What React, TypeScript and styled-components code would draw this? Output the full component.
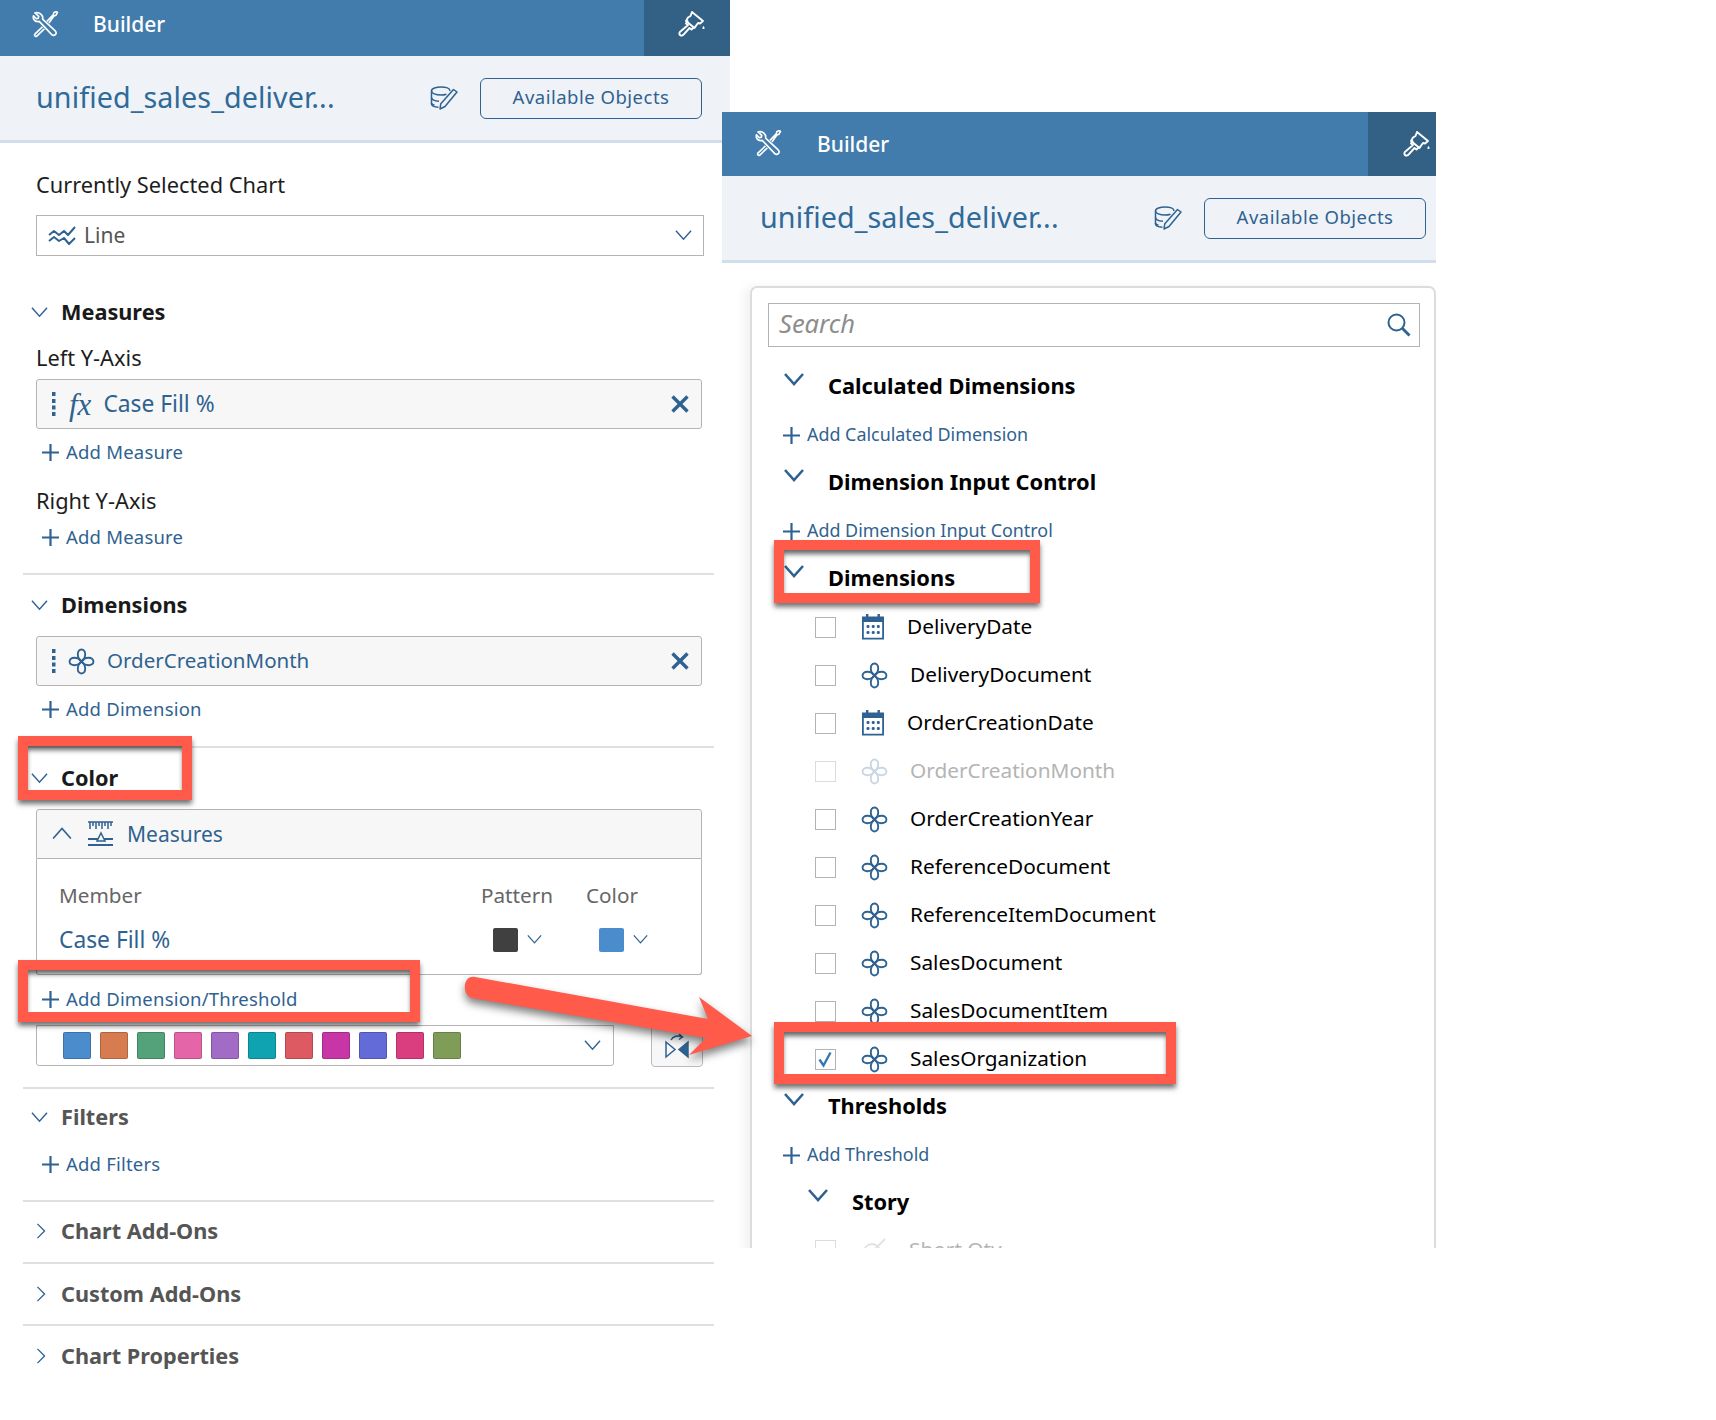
import React from 'react'
import styled, { createGlobalStyle } from 'styled-components'

const BLUE = '#2f6290'
const BAND = '#417cac'
const BAND_DARK = '#336185'
const LINE = '#b4b4b4'
const RED = '#ff5a4a'

const GlobalStyle = createGlobalStyle`
  html, body {
    margin: 0;
    padding: 0;
    background: #fff;
    font-family: "Noto Sans", "Open Sans", sans-serif;
  }
`

const Stage = styled.div`
  position: relative;
  width: 1716px;
  height: 1420px;
  overflow: hidden;
  background: #fff;
`

const LeftWindow = styled.section`
  position: absolute;
  left: 0;
  top: 0;
  width: 730px;
  background: #fff;
`

const RightWindow = styled.section`
  position: absolute;
  left: 722px;
  top: 112px;
  width: 714px;
  height: 1136px;
  overflow: hidden;
  background: #fff;
`

const TopBar = styled.header<{ $h: number; $gap: number; $pad: number; $tool: number; $lift: number; $brush: number }>`
  display: flex;
  align-items: center;
  box-sizing: border-box;
  height: ${({ $h }) => $h}px;
  padding-left: ${({ $pad }) => $pad}px;
  gap: ${({ $gap }) => $gap}px;
  background: ${BAND};
  color: #fff;
  font-size: 21px;
  font-weight: 500;
  & > svg {
    margin-bottom: ${({ $lift }) => $lift}px;
  }
  & > span {
    flex: 1;
    margin-bottom: ${({ $lift }) => $lift}px;
  }
  & > div {
    display: flex;
    align-items: center;
    box-sizing: border-box;
    width: ${({ $tool }) => $tool}px;
    height: 100%;
    padding: 0 0 ${({ $lift }) => $lift}px ${({ $brush }) => $brush}px;
    background: ${BAND_DARK};
  }
`

const SubBar = styled.div<{ $pl: number; $pr: number }>`
  display: flex;
  align-items: center;
  height: 84px;
  padding: 0 ${({ $pr }) => $pr}px 0 ${({ $pl }) => $pl}px;
  background: #eff3f8;
  border-bottom: 3px solid #d1deec;
`

const Title = styled.div`
  flex: 1;
  margin-bottom: 3px;
  color: #2f6a98;
  font-size: 28.7px;
  letter-spacing: 0.1px;
  white-space: nowrap;
`

const ObjectsButton = styled.button`
  width: 222px;
  height: 41px;
  margin-left: 22px;
  padding: 0 0 3px;
  background: transparent;
  border: 1px solid ${BLUE};
  border-radius: 6px;
  color: ${BLUE};
  font: 18.5px "Noto Sans", sans-serif;
  letter-spacing: 0.5px;
`

const LeftBody = styled.div`
  padding: 27px 0 40px;
`

const Label = styled.div<{ $mt?: number }>`
  margin: ${({ $mt = 0 }) => $mt}px 0 0 36px;
  height: 30px;
  line-height: 30px;
  font-size: 21.8px;
  color: #1d1d1d;
`

const SelectBox = styled.div`
  display: flex;
  align-items: center;
  box-sizing: border-box;
  margin: 15px 0 0 36px;
  width: 668px;
  height: 41px;
  padding: 0 11px;
  border: 1px solid ${LINE};
  color: #555;
  font-size: 21px;
  gap: 8px;
  & > span {
    flex: 1;
    margin-bottom: 2px;
  }
`

const SectionHead = styled.div<{ $mt: number; $muted?: boolean; $closed?: boolean }>`
  display: flex;
  align-items: center;
  box-sizing: border-box;
  height: 30px;
  margin-top: ${({ $mt }) => $mt}px;
  padding-left: ${({ $closed }) => ($closed ? 33 : 31)}px;
  gap: ${({ $closed }) => ($closed ? 12 : 13)}px;
  color: ${({ $muted }) => ($muted ? '#555' : '#1a1a1a')};
  font-size: 21.7px;
  font-weight: 700;
  & > span {
    margin-bottom: 2px;
  }
`

const Token = styled.div<{ $mt: number }>`
  display: flex;
  align-items: center;
  box-sizing: border-box;
  margin: ${({ $mt }) => $mt}px 0 0 36px;
  width: 666px;
  height: 50px;
  padding: 0 12px 0 14px;
  background: #f7f7f7;
  border: 1px solid ${LINE};
  border-radius: 3px;
  color: ${BLUE};
  & > svg:nth-child(2) {
    margin-left: 11px;
  }
`

const TokenText = styled.span<{ $size: number }>`
  flex: 1;
  margin: 0 0 2px 12px;
  font-size: ${({ $size }) => $size}px;
`

const FxMark = styled.i`
  margin-left: 12px;
  font-family: "Liberation Serif", serif;
  font-size: 31px;
  line-height: 1;
`

const AddLink = styled.div<{ $mt: number; $ml?: number; $small?: boolean }>`
  display: flex;
  align-items: center;
  gap: 6px;
  height: 26px;
  margin: ${({ $mt }) => $mt}px 0 0 ${({ $ml = 41 }) => $ml}px;
  color: ${BLUE};
  font-size: ${({ $small }) => ($small ? 17.9 : 18.5)}px;
  letter-spacing: ${({ $small }) => ($small ? 0 : 0.2)}px;
  & > span {
    margin-bottom: 2px;
  }
`

const Divider = styled.hr<{ $mt: number }>`
  margin: ${({ $mt }) => $mt}px 16px 0 23px;
  border: 0;
  height: 2px;
  background: #e0e0e0;
`

const ColorBox = styled.div`
  margin: 16px 0 0 36px;
  width: 666px;
`

const ColorHead = styled.div`
  display: flex;
  align-items: center;
  box-sizing: border-box;
  height: 50px;
  padding-left: 15px;
  gap: 13px;
  background: #f7f7f7;
  border: 1px solid ${LINE};
  border-radius: 3px 3px 0 0;
  color: ${BLUE};
  font-size: 21px;
  & > svg:first-child {
    margin-right: 2px;
  }
`

const ColorTable = styled.div`
  box-sizing: border-box;
  height: 116px;
  padding: 13px 0 0 22px;
  border: 1px solid ${LINE};
  border-top: 0;
  border-radius: 0 0 3px 3px;
  display: grid;
  grid-template-columns: 422px 105px 1fr;
  grid-auto-rows: 45px;
  align-items: center;
  font-size: 20.7px;
  color: #666;
`

const MemberLink = styled.span`
  color: ${BLUE};
  font-size: 22.8px;
`

const SwatchPick = styled.div<{ $pl: number }>`
  display: flex;
  align-items: center;
  gap: 9px;
  padding-left: ${({ $pl }) => $pl}px;
`

const Swatch = styled.i<{ $c: string; $w?: number; $h?: number; $edge?: string }>`
  display: block;
  flex: none;
  width: ${({ $w = 25 }) => $w}px;
  height: ${({ $h = 24 }) => $h}px;
  background: ${({ $c }) => $c};
  border-radius: 2px;
  box-shadow: ${({ $edge }) => ($edge ? `0 0 0 1px ${$edge} inset` : 'none')};
`

const PaletteRow = styled.div`
  display: flex;
  align-items: flex-start;
  margin: 13px 0 0 36px;
  gap: 37px;
`

const Palette = styled.div`
  display: flex;
  align-items: center;
  box-sizing: border-box;
  width: 578px;
  height: 41px;
  padding: 0 12px 0 26px;
  gap: 9px;
  border: 1px solid ${LINE};
  border-radius: 0 0 3px 3px;
  & > svg {
    margin-left: auto;
  }
`

const SwapButton = styled.div`
  display: flex;
  align-items: center;
  justify-content: center;
  box-sizing: border-box;
  width: 52px;
  height: 42px;
  background: #f7f7f7;
  border: 1px solid #bbb;
  border-radius: 4px;
`

const Card = styled.div`
  box-sizing: border-box;
  margin: 23px 0 0 28px;
  padding: 15px 14px 0 16px;
  height: 1000px;
  border: 2px solid #dcdcdc;
  border-radius: 7px;
  box-shadow: -6px 0 10px rgba(0, 0, 0, 0.05);
`

const SearchBox = styled.div`
  display: flex;
  align-items: center;
  box-sizing: border-box;
  height: 44px;
  padding: 0 8px 0 10px;
  border: 1px solid ${LINE};
  color: #8d8d8d;
  font-size: 25.5px;
  font-style: italic;
  & > span {
    flex: 1;
    margin-bottom: 4px;
  }
`

const TreeHead = styled.div<{ $mt: number; $indent?: number }>`
  display: flex;
  align-items: flex-start;
  gap: 24px;
  height: 30px;
  margin: ${({ $mt }) => $mt}px 0 0 ${({ $indent = 15 }) => $indent}px;
  color: #000;
  font-size: 21.8px;
  font-weight: 700;
  line-height: 28px;
  & > svg {
    margin: 0 0 0 1px;
  }
`

const FieldRow = styled.div<{ $mt?: number; $off?: boolean; $date?: boolean }>`
  display: flex;
  align-items: center;
  height: 48px;
  margin-top: ${({ $mt = 0 }) => $mt}px;
  padding-left: 47px;
  color: ${({ $off }) => ($off ? '#b4b4b4' : '#000')};
  font-size: 20.8px;
  & > span {
    margin: 0 0 2px ${({ $date }) => ($date ? 22 : 22)}px;
  }
  & > svg {
    margin-left: 25px;
    opacity: ${({ $off }) => ($off ? 0.25 : 1)};
  }
`

const Check = styled.i<{ $off?: boolean }>`
  display: flex;
  flex: none;
  box-sizing: border-box;
  width: 21px;
  height: 21px;
  padding: 1px;
  border: 1px solid ${({ $off }) => ($off ? '#dcdcdc' : '#b4b4b4')};
  background: #fff;
`

const Callout = styled.div<{ $x: number; $y: number; $w: number; $h: number }>`
  position: absolute;
  left: ${({ $x }) => $x}px;
  top: ${({ $y }) => $y}px;
  width: ${({ $w }) => $w}px;
  height: ${({ $h }) => $h}px;
  box-sizing: border-box;
  border: 10px solid ${RED};
  box-shadow: 0 4px 5px rgba(0, 0, 0, 0.55), inset 0 5px 5px -1px rgba(0, 0, 0, 0.6);
`

const ArrowLayer = styled.svg`
  position: absolute;
  left: 440px;
  top: 960px;
  overflow: visible;
  filter: drop-shadow(0 5px 4px rgba(0, 0, 0, 0.5));
`

function Chevron({ dir = 'down', size = 17, width = 1.5 }: { dir?: 'down' | 'up' | 'right'; size?: number; width?: number }) {
  const d = dir === 'down' ? 'M1 4l8 9 8-9' : dir === 'up' ? 'M1 13l8-9 8 9' : 'M5 1l8 8-8 8'
  return (
    <svg width={size} height={size} viewBox="0 0 18 18" fill="none" stroke={BLUE} strokeWidth={width}>
      <path d={d} />
    </svg>
  )
}

function TreeChevron() {
  return (
    <svg width="20" height="14" viewBox="0 0 20 14" fill="none" stroke={BLUE} strokeWidth="2.6">
      <path d="M1 2l9 10 9-10" />
    </svg>
  )
}

function ToolsIcon() {
  return (
    <svg width="27" height="27" viewBox="0 0 28 28" fill="none" stroke="#fff" strokeWidth="1.7" strokeLinejoin="round">
      <path d="M3 2l4 3.500-.5 2L4.500 8 1.500 5c-.8 3 .8 6 4.500 6l1.500-.2L20 24c1.300 1.500 3 1.700 4.200.6 1.300-1.200 1-3-.4-4.200L11 8.500C11.800 4.500 8 .8 3 2z" />
      <path d="M15.500 10.800L22 4l.8-2.500L25.500.5l.9 1-1.500 2.800-2.200.9L17.500 12.500M10.800 16.500L3 24c-1 1.400.5 3 2 2l7.800-7.500" />
    </svg>
  )
}

function BrushIcon() {
  return (
    <svg width="28" height="28" viewBox="0 0 28 28" fill="none" stroke="#fff" strokeWidth="1.9" strokeLinejoin="round">
      <path d="M14 2l11 9-3 2.500-2-.5-1.500 2-2 3-8.500-7 2-3.500 2.500-1.500z" />
      <path d="M10 10.500l-2 3 2 1.500L3 21c-2 1.500-2 3-1 4s2.500 1 4-.8L11.500 18l2 1.500 2.500-2.500" />
      <path d="M25.500 16c1 1.300 1.300 2 .9 2.700-.5.500-1.400.5-1.800 0-.4-.7 0-1.400.9-2.700z" fill="#fff" stroke="none" />
    </svg>
  )
}

function DbEditIcon() {
  return (
    <svg width="28" height="24" viewBox="0 0 28 24" fill="none" stroke={BLUE} strokeWidth="1.5" strokeLinejoin="round">
      <path d="M20 5c0-2.500-4.200-4-9-4S1.500 2.500 1.500 5v13c0 1.800 3 3 7 3.300" />
      <path d="M1.500 5c0 2.300 4.300 4 9.500 4 2 0 4-.3 5.500-.8M1.500 11.500c0 2 3 3.400 7.500 3.800M1.500 17c0 1 1 1.600 3 2.200" />
      <path d="M23.500 3.500l3.500 2.500-12 14.500-5 2.500.8-5.300z" fill="#eff3f8" />
    </svg>
  )
}

function LineChartIcon() {
  return (
    <svg width="28" height="20" viewBox="0 0 28 20" fill="none" stroke={BLUE} strokeWidth="2" strokeLinejoin="round">
      <path d="M1 9l5-4 5 4 5-4 4 4 7-8" />
      <path d="M1 15l5-4 5 4 5-3 5 6 6-6" />
    </svg>
  )
}

function GripDots() {
  return (
    <svg width="6" height="24" viewBox="0 0 6 24" fill={BLUE}>
      <rect x="1" y="0" width="3.500" height="4" />
      <rect x="1" y="7" width="3.500" height="4" />
      <rect x="1" y="13.500" width="3.500" height="4" />
      <rect x="1" y="20" width="3.500" height="4" />
    </svg>
  )
}

function CloseIcon() {
  return (
    <svg width="18" height="18" viewBox="0 0 18 18" stroke={BLUE} strokeWidth="3.400">
      <path d="M1.500 1.500l15 15M16.500 1.500l-15 15" />
    </svg>
  )
}

function PlusIcon() {
  return (
    <svg width="19" height="19" viewBox="0 0 19 19" stroke={BLUE} strokeWidth="2.200">
      <path d="M9.500 1v17M1 9.500h17" />
    </svg>
  )
}

function FlowerIcon() {
  const petal = 'M13 13C8.500 10 8 1.500 13 1.500s4.500 8.500 0 11.500z'
  return (
    <svg width="27" height="27" viewBox="0 0 26 26" fill="none" stroke={BLUE} strokeWidth="1.800" strokeLinejoin="round">
      <path d={petal} />
      <path d={petal} transform="rotate(90 13 13)" />
      <path d={petal} transform="rotate(180 13 13)" />
      <path d={petal} transform="rotate(270 13 13)" />
    </svg>
  )
}

function CalendarIcon() {
  return (
    <svg width="24" height="26" viewBox="0 0 24 26" fill={BLUE}>
      <rect x="5" y="0" width="2.400" height="4" />
      <rect x="16.500" y="0" width="2.400" height="4" />
      <path d="M1 2.500h22V25.500H1z M2.800 8V23.700H21.200V8z" fillRule="evenodd" />
      {[5.500, 10.700, 15.800].map(x =>
        [11, 17].map(y => <rect key={`${x}-${y}`} x={x} y={y} width="3" height="3" rx="1.200" />)
      )}
    </svg>
  )
}

function RulerIcon() {
  return (
    <svg width="27" height="28" viewBox="0 0 27 28" fill="none" stroke={BLUE} strokeWidth="1.500">
      <path d="M1 2h25M3 2v7M6 2v4M9 2v7M12 2v4M15 2v7M18 2v4M21 2v7M24 2v4" />
      <path d="M1 19h10M17 19h9M1 25h25" strokeWidth="1.800" />
      <path d="M14 13l4 8h-8z" />
    </svg>
  )
}

function SwapIcon() {
  return (
    <svg width="24" height="26" viewBox="0 0 24 26" stroke={BLUE} fill="none" strokeWidth="1.500">
      <path d="M1 9v15l9-7.500z" />
      <path d="M23 9v15l-9-7.500z" fill={BLUE} />
      <path d="M6 7c2-4 7-5 11-3M14 1l3.500 3-3.500 2.500" />
    </svg>
  )
}

function SearchIcon() {
  return (
    <svg width="24" height="24" viewBox="0 0 24 24" fill="none" stroke={BLUE} strokeWidth="2">
      <circle cx="9.500" cy="9.500" r="8" />
      <path d="M15 15l7.500 7.500" strokeWidth="2.800" />
    </svg>
  )
}

function TickMark() {
  return (
    <svg width="17" height="17" viewBox="0 0 17 17" fill="none" stroke="#3578b5" strokeWidth="2.400">
      <path d="M2.500 8.500l4 6 7-13" />
    </svg>
  )
}

function KpiIcon() {
  return (
    <svg width="26" height="26" viewBox="0 0 26 26" fill="none" stroke="#8a8a8a" strokeWidth="1.800">
      <circle cx="11" cy="15" r="8" />
      <circle cx="11" cy="15" r="3" />
      <path d="M11 15L24 2" />
    </svg>
  )
}

const paletteColors = [
  '#4a8ccc', '#d67c50', '#54a27a', '#e565a9', '#a26bc6', '#0fa3b1',
  '#dd5a63', '#c835a6', '#636bd8', '#db3e7e', '#7f9d57',
]

type Field = { name: string; date?: boolean; off?: boolean; picked?: boolean }

const fields: Field[] = [
  { name: 'DeliveryDate', date: true },
  { name: 'DeliveryDocument' },
  { name: 'OrderCreationDate', date: true },
  { name: 'OrderCreationMonth', off: true },
  { name: 'OrderCreationYear' },
  { name: 'ReferenceDocument' },
  { name: 'ReferenceItemDocument' },
  { name: 'SalesDocument' },
  { name: 'SalesDocumentItem' },
  { name: 'SalesOrganization', picked: true },
]

function WindowHeader({ wide }: { wide?: boolean }) {
  return (
    <>
      <TopBar
        $h={wide ? 64 : 56}
        $pad={wide ? 33 : 32}
        $gap={wide ? 35 : 34}
        $tool={wide ? 68 : 86}
        $lift={wide ? 1 : 8}
        $brush={wide ? 35 : 34}
      >
        <ToolsIcon />
        <span>Builder</span>
        <div>
          <BrushIcon />
        </div>
      </TopBar>
      <SubBar $pl={wide ? 38 : 36} $pr={wide ? 10 : 28}>
        <Title>unified_sales_deliver...</Title>
        <DbEditIcon />
        <ObjectsButton>Available Objects</ObjectsButton>
      </SubBar>
    </>
  )
}

function BuilderPanel() {
  return (
    <LeftWindow>
      <WindowHeader />
      <LeftBody>
        <Label>Currently Selected Chart</Label>
        <SelectBox>
          <LineChartIcon />
          <span>Line</span>
          <Chevron />
        </SelectBox>

        <SectionHead $mt={41}>
          <Chevron />
          <span>Measures</span>
        </SectionHead>
        <Label $mt={16}>Left Y-Axis</Label>
        <Token $mt={6}>
          <GripDots />
          <FxMark>fx</FxMark>
          <TokenText $size={22.8}>Case Fill %</TokenText>
          <CloseIcon />
        </Token>
        <AddLink $mt={10}>
          <PlusIcon />
          <span>Add Measure</span>
        </AddLink>
        <Label $mt={21}>Right Y-Axis</Label>
        <AddLink $mt={8}>
          <PlusIcon />
          <span>Add Measure</span>
        </AddLink>
        <Divider $mt={23} />

        <SectionHead $mt={15}>
          <Chevron />
          <span>Dimensions</span>
        </SectionHead>
        <Token $mt={16}>
          <GripDots />
          <FlowerIcon />
          <TokenText $size={20.5}>OrderCreationMonth</TokenText>
          <CloseIcon />
        </Token>
        <AddLink $mt={10}>
          <PlusIcon />
          <span>Add Dimension</span>
        </AddLink>
        <Divider $mt={24} />

        <SectionHead $mt={15}>
          <Chevron />
          <span>Color</span>
        </SectionHead>
        <ColorBox>
          <ColorHead>
            <Chevron dir="up" size={20} />
            <RulerIcon />
            Measures
          </ColorHead>
          <ColorTable>
            <span>Member</span>
            <span>Pattern</span>
            <span>Color</span>
            <MemberLink>Case Fill %</MemberLink>
            <SwatchPick $pl={12}>
              <Swatch $c="#404040" />
              <Chevron size={15} />
            </SwatchPick>
            <SwatchPick $pl={13}>
              <Swatch $c="#4a8ccc" />
              <Chevron size={15} />
            </SwatchPick>
          </ColorTable>
        </ColorBox>
        <AddLink $mt={11} $ml={41}>
          <PlusIcon />
          <span>Add Dimension/Threshold</span>
        </AddLink>
        <PaletteRow>
          <Palette>
            {paletteColors.map(c => (
              <Swatch key={c} $c={c} $w={28} $h={27} $edge="rgba(0,0,0,.18)" />
            ))}
            <Chevron />
          </Palette>
          <SwapButton>
            <SwapIcon />
          </SwapButton>
        </PaletteRow>
        <Divider $mt={20} />

        <SectionHead $mt={13} $muted>
          <Chevron />
          <span>Filters</span>
        </SectionHead>
        <AddLink $mt={19}>
          <PlusIcon />
          <span>Add Filters</span>
        </AddLink>
        <Divider $mt={23} />

        <SectionHead $mt={14} $muted $closed>
          <Chevron dir="right" size={16} />
          <span>Chart Add-Ons</span>
        </SectionHead>
        <Divider $mt={16} />
        <SectionHead $mt={15} $muted $closed>
          <Chevron dir="right" size={16} />
          <span>Custom Add-Ons</span>
        </SectionHead>
        <Divider $mt={15} />
        <SectionHead $mt={15} $muted $closed>
          <Chevron dir="right" size={16} />
          <span>Chart Properties</span>
        </SectionHead>
      </LeftBody>
    </LeftWindow>
  )
}

function ObjectsPanel() {
  return (
    <RightWindow>
      <WindowHeader wide />
      <Card>
        <SearchBox>
          <span>Search</span>
          <SearchIcon />
        </SearchBox>
        <TreeHead $mt={25}>
          <TreeChevron />
          Calculated Dimensions
        </TreeHead>
        <AddLink $mt={20} $ml={14} $small>
          <PlusIcon />
          <span>Add Calculated Dimension</span>
        </AddLink>
        <TreeHead $mt={20}>
          <TreeChevron />
          Dimension Input Control
        </TreeHead>
        <AddLink $mt={20} $ml={14} $small>
          <PlusIcon />
          <span>Add Dimension Input Control</span>
        </AddLink>
        <TreeHead $mt={20}>
          <TreeChevron />
          Dimensions
        </TreeHead>
        {fields.map((f, i) => (
          <FieldRow key={f.name} $mt={i === 0 ? 9 : 0} $off={f.off} $date={f.date}>
            <Check $off={f.off}>{f.picked && <TickMark />}</Check>
            {f.date ? <CalendarIcon /> : <FlowerIcon />}
            <span>{f.name}</span>
          </FieldRow>
        ))}
        <TreeHead $mt={9}>
          <TreeChevron />
          Thresholds
        </TreeHead>
        <AddLink $mt={20} $ml={14} $small>
          <PlusIcon />
          <span>Add Threshold</span>
        </AddLink>
        <TreeHead $mt={20} $indent={39}>
          <TreeChevron />
          Story
        </TreeHead>
        <FieldRow $mt={8} $off>
          <Check $off />
          <KpiIcon />
          <span>Short Qty</span>
        </FieldRow>
      </Card>
    </RightWindow>
  )
}

export default function App() {
  return (
    <Stage>
      <GlobalStyle />
      <BuilderPanel />
      <ObjectsPanel />
      <Callout $x={18} $y={736} $w={174} $h={64} />
      <Callout $x={18} $y={960} $w={402} $h={62} />
      <Callout $x={774} $y={540} $w={266} $h={63} />
      <Callout $x={774} $y={1022} $w={402} $h={62} />
      <ArrowLayer width="320" height="110" viewBox="0 0 320 110">
        <path
          d="M35 17L268 59 259 37 312 76 249 95 266 78 32 38C22 36 22 15 35 17Z"
          fill={RED}
        />
      </ArrowLayer>
    </Stage>
  )
}
